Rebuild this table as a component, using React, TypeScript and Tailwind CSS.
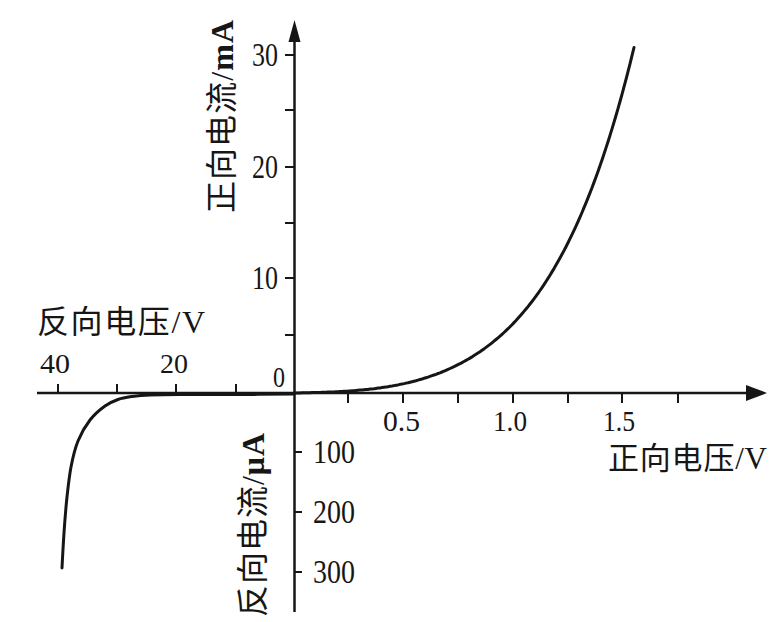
import React from "react";

type Pt = [number, number];

const ORIGIN_X = 294;
const ORIGIN_Y = 393;

// forward branch: fitted to the traced plot, h = 2u + 5.3u³ + 0.0844u⁶ (u = px/100)
function forwardPath() {
  const pts: string[] = [];
  for (let x = ORIGIN_X; x <= 634; x += 2) {
    const u = (x - ORIGIN_X) / 100;
    const h = 2 * u + 5.3 * u ** 3 + 0.0844 * u ** 6;
    pts.push(`${x},${(ORIGIN_Y - h).toFixed(1)}`);
  }
  return `M${pts.join(" L")}`;
}

// reverse branch (origin → breakdown)
const reverse: Pt[] = [
  [294, 394], [240, 394.5], [180, 394.5], [150, 395], [132, 396.5], [118, 399.5],
  [105, 406], [90, 420], [78, 441], [71, 467], [67, 497], [64, 533], [62, 568],
];

// catmull-rom → cubic bezier
function smooth(pts: Pt[]) {
  let d = `M${pts[0][0]},${pts[0][1]}`;
  for (let i = 0; i < pts.length - 1; i++) {
    const p0 = pts[i - 1] ?? pts[i];
    const p1 = pts[i];
    const p2 = pts[i + 1];
    const p3 = pts[i + 2] ?? p2;
    const c1x = p1[0] + (p2[0] - p0[0]) / 6;
    const c1y = p1[1] + (p2[1] - p0[1]) / 6;
    const c2x = p2[0] - (p3[0] - p1[0]) / 6;
    const c2y = p2[1] - (p3[1] - p1[1]) / 6;
    d += ` C${c1x.toFixed(1)},${c1y.toFixed(1)} ${c2x.toFixed(1)},${c2y.toFixed(1)} ${p2[0]},${p2[1]}`;
  }
  return d;
}

const ink = "#161616";
const serif = "'Liberation Serif', 'Noto Sans CJK SC', serif";
const cjk = "'Noto Sans CJK SC', 'Liberation Sans', sans-serif";

export default function App() {
  const yUpTicks = [55, 110, 167, 223, 278, 335];
  const yDownTicks = [452, 512, 572];
  const xNegTicks = [58, 117, 176, 236];
  const xPosTicks = [348, 403, 458, 513, 568, 622, 678];

  return (
    <div className="w-[783px] h-[622px] bg-white overflow-hidden">
      <svg width="783" height="622" viewBox="0 0 783 622" className="block">
        {/* axes */}
        <line x1="37" y1="393" x2="752" y2="393" stroke={ink} strokeWidth="2.5" />
        <polygon points="767,393 746,385 746,401" fill={ink} />
        <line x1="294.5" y1="38" x2="294.5" y2="612" stroke={ink} strokeWidth="2.5" />
        <polygon points="294.5,20 288.5,42 300.5,42" fill={ink} />

        {/* ticks */}
        {yUpTicks.map((y) => (
          <line key={`yu${y}`} x1="285" y1={y} x2="295" y2={y} stroke={ink} strokeWidth="2" />
        ))}
        {yDownTicks.map((y) => (
          <line key={`yd${y}`} x1="294" y1={y} x2="302" y2={y} stroke={ink} strokeWidth="2" />
        ))}
        {xNegTicks.map((x) => (
          <line key={`xn${x}`} x1={x} y1="384" x2={x} y2="393" stroke={ink} strokeWidth="2" />
        ))}
        {xPosTicks.map((x) => (
          <line key={`xp${x}`} x1={x} y1="393" x2={x} y2="403" stroke={ink} strokeWidth="2" />
        ))}

        {/* curves */}
        <path d={forwardPath()} fill="none" stroke={ink} strokeWidth="3" strokeLinecap="round" strokeLinejoin="round" />
        <path d={smooth(reverse)} fill="none" stroke={ink} strokeWidth="3" strokeLinecap="round" />

        {/* tick labels */}
        <g fill={ink} fontFamily={serif}>
          <text x="252" y="66" fontSize="34" textLength="26" lengthAdjust="spacingAndGlyphs">30</text>
          <text x="252" y="178" fontSize="34" textLength="26" lengthAdjust="spacingAndGlyphs">20</text>
          <text x="252" y="289" fontSize="34" textLength="26" lengthAdjust="spacingAndGlyphs">10</text>
          <text x="273" y="387" fontSize="30" textLength="12" lengthAdjust="spacingAndGlyphs">0</text>

          <text x="40" y="373" fontSize="27" textLength="30" lengthAdjust="spacingAndGlyphs">40</text>
          <text x="160" y="373" fontSize="27" textLength="28" lengthAdjust="spacingAndGlyphs">20</text>

          <text x="383" y="431" fontSize="29" textLength="37" lengthAdjust="spacingAndGlyphs">0.5</text>
          <text x="493" y="431" fontSize="29" textLength="34" lengthAdjust="spacingAndGlyphs">1.0</text>
          <text x="603" y="431" fontSize="29" textLength="32" lengthAdjust="spacingAndGlyphs">1.5</text>

          <text x="313" y="463" fontSize="34" textLength="42" lengthAdjust="spacingAndGlyphs">100</text>
          <text x="313" y="523" fontSize="34" textLength="42" lengthAdjust="spacingAndGlyphs">200</text>
          <text x="313" y="583" fontSize="34" textLength="42" lengthAdjust="spacingAndGlyphs">300</text>
        </g>

        {/* axis titles */}
        <g fill={ink}>
          <text x="37" y="333" fontSize="32" fontFamily={cjk} textLength="168" lengthAdjust="spacing">
            反向电压<tspan fontFamily={serif}>/V</tspan>
          </text>
          <text x="608" y="469" fontSize="31" fontFamily={cjk} textLength="159" lengthAdjust="spacing">
            正向电压<tspan fontFamily={serif}>/V</tspan>
          </text>
          <text transform="translate(233 213) rotate(-90)" fontSize="32" fontFamily={cjk} textLength="193" lengthAdjust="spacing">
            正向电流<tspan fontFamily={serif}>/</tspan><tspan fontFamily={serif} fontWeight="bold">mA</tspan>
          </text>
          <text transform="translate(264 617) rotate(-90)" fontSize="32" fontFamily={cjk} textLength="184" lengthAdjust="spacing">
            反向电流<tspan fontFamily={serif}>/</tspan><tspan fontFamily={serif} fontWeight="bold">μA</tspan>
          </text>
        </g>
      </svg>
    </div>
  );
}
